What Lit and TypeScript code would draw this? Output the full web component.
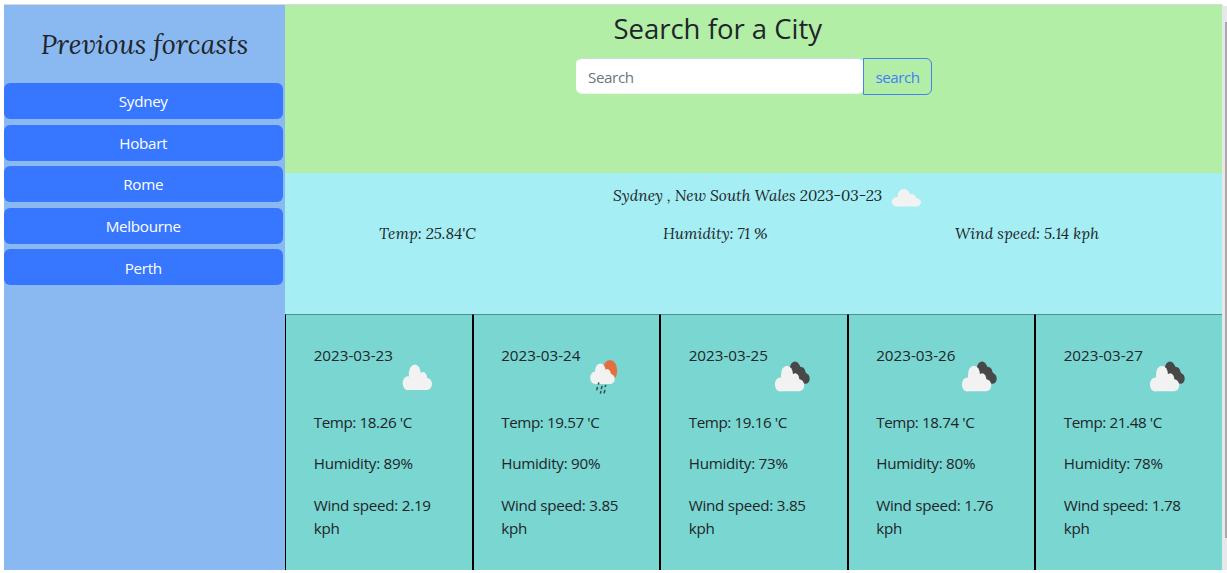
import { LitElement, html, css, svg } from "lit";
import { customElement, property } from "lit/decorators.js";

const CLOUD = svg`<g fill="#f2f2f2"><ellipse cx="15" cy="30.3" rx="5.3" ry="7"/><ellipse cx="21.8" cy="20.5" rx="6" ry="9"/><ellipse cx="30" cy="25.5" rx="4.2" ry="6.4"/><ellipse cx="34" cy="31" rx="5" ry="6"/><path d="M16 20h14l4 6v11H15.5z"/></g>`;

@customElement("weather-icon")
class WeatherIcon extends LitElement {
  @property() kind = "cloud";
  static styles = css`
    :host { display: block; }
    svg { display: block; width: 100%; height: 100%; }
  `;
  render() {
    const art =
      this.kind === "rain"
        ? svg`<ellipse cx="30" cy="17.5" rx="7.2" ry="10.5" fill="#e2703f"/>
            <g fill="#f2f2f2"><ellipse cx="15" cy="24.8" rx="4.8" ry="6.2"/><ellipse cx="20.3" cy="17.8" rx="5.2" ry="7.4"/><ellipse cx="27.2" cy="21.8" rx="3.8" ry="5.8"/><ellipse cx="30.4" cy="26" rx="4.4" ry="5"/><path d="M15 18h13l3 5v8H15z"/></g>
            <g stroke="#3c4f50" stroke-width="1.6" stroke-linecap="round" fill="none"><path d="M18.6 30v1M17.4 34.6l-.6 2M22 33.6l-.6 2M25.7 32.5l-.5 1M20.9 38.6l-.4 1.4M24.8 37.6l-.6 2.2"/></g>`
        : this.kind === "broken"
          ? svg`<g fill="#484848"><ellipse cx="27" cy="15" rx="5" ry="6.5"/><ellipse cx="33.5" cy="20" rx="4" ry="6"/><ellipse cx="37.5" cy="25.5" rx="4.2" ry="5.3"/><path d="M24 18l7-6 8 9v8h-7z"/></g><g transform="translate(-2.8 1.2)">${CLOUD}</g>`
          : CLOUD;
    return html`<svg viewBox="0 0 48 48" preserveAspectRatio="none">${art}</svg>`;
  }
}

@customElement("app-root")
class AppRoot extends LitElement {
  private cities = ["Sydney", "Hobart", "Rome", "Melbourne", "Perth"];
  private days = [
    ["2023-03-23", "cloud", "18.26", "89", "2.19"],
    ["2023-03-24", "rain", "19.57", "90", "3.85"],
    ["2023-03-25", "broken", "19.16", "73", "3.85"],
    ["2023-03-26", "broken", "18.74", "80", "1.76"],
    ["2023-03-27", "broken", "21.48", "78", "1.78"],
  ];
  static styles = css`
    :host { display: flow-root; height: 573px; overflow: hidden; background: #fff; color: #212529; font: 15.2px/23.4px "Open Sans", "Noto Sans", sans-serif; }
    * { box-sizing: border-box; }
    .page { height: 569px; margin-top: 4px; display: flex; padding-left: 4px; }
    .frame { display: grid; grid-template-columns: 281px 937px; border-top: 1.5px solid #d6dcdc; height: 566px; }
    .side { background: #89b9f0; padding-top: 1px; }
    .side h2 { margin: 0; height: 77px; padding-top: 20px; text-align: center; font: italic 400 27px/36px "Lora", "Liberation Serif", serif; }
    .list { display: flex; flex-direction: column; gap: 5.6px; width: 278.5px; }
    .city { height: 36px; border: 0; border-radius: 6px; background: #3777ff; color: #fff; font: inherit; letter-spacing: -0.3px; padding: 2px 0 0; }
    .main { display: grid; grid-template-rows: 168px 140.5px 256.5px; min-width: 0; }
    .search { background: #b3eea6; padding-top: 5px; }
    .search h1 { margin: 0; text-align: center; font: 400 27.5px/38px "Open Sans", sans-serif; padding-right: 72px; }
    .form { display: flex; width: 356px; margin: 10px 0 0 291px; height: 37px; }
    .input { width: 288px; height: 36px; border: 1px solid; border-color: #ccdcd8 #fff #eef3ee #fff; border-radius: 6px; background: #fff; color: #6c757d; padding: 7px 11px 0; letter-spacing: -0.4px; }
    .go { flex: 1; margin-left: -1px; border: 1px solid #3f83f5; border-radius: 0 6px 6px 0; background: transparent; color: #3f7fff; font: inherit; padding: 2px 0 0; letter-spacing: -0.5px; }
    .today { background: #a4eef4; font: italic 15.45px/24px "Lora", "Liberation Serif", serif; }
    .place { display: flex; height: 47.5px; padding: 10px 0 0 328px; }
    .place weather-icon { width: 48px; height: 33px; margin-top: -2px; }
    .placename { width: 269px; white-space: nowrap; }
    .stats { display: grid; grid-template-columns: 284px 292px 1fr; padding-left: 94px; }
    .days { display: grid; grid-template-columns: repeat(5, 187.5px); background: #79d6d1; }
    .day { border: 1px solid #000; border-top-color: #558f90; border-bottom: 0; padding: 29px 21px 0 27.7px; }
    .day:last-child { border-right-color: #709b9b; }
    .date { display: flex; height: 49px; white-space: nowrap; }
    .date span { width: 79.3px; }
    .date weather-icon { width: 48px; height: 48px; margin-top: 9.5px; flex: none; }
    .day p { margin: 18.3px 0 0; letter-spacing: -0.26px; }
    .day .temp { margin-top: 18px; letter-spacing: -0.4px; }
    .bar { width: 5px; margin-top: 2px; height: 564px; background: linear-gradient(#aaa, #aaa) 3px 16px / 2px 516px no-repeat, #e6e8ea; }
  `;
  render() {
    return html`<div class="page">
      <div class="frame">
        <aside class="side">
          <h2>Previous forcasts</h2>
          <div class="list">${this.cities.map((c) => html`<button class="city">${c}</button>`)}</div>
        </aside>
        <main class="main">
          <section class="search">
            <h1>Search for a City</h1>
            <div class="form"><div class="input">Search</div><button class="go">search</button></div>
          </section>
          <section class="today">
            <div class="place"><span class="placename">Sydney , New South Wales 2023-03-23</span><weather-icon></weather-icon></div>
            <div class="stats"><span>Temp: 25.84'C</span><span>Humidity: 71 %</span><span>Wind speed: 5.14 kph</span></div>
          </section>
          <section class="days">
            ${this.days.map(
              ([date, kind, temp, hum, wind]) => html`<article class="day">
                <div class="date"><span>${date}</span><weather-icon .kind=${kind}></weather-icon></div>
                <p class="temp">Temp: ${temp} 'C</p>
                <p>Humidity: ${hum}%</p>
                <p>Wind speed: ${wind}<br />kph</p>
              </article>`,
            )}
          </section>
        </main>
      </div>
      <div class="bar"></div>
    </div>`;
  }
}
